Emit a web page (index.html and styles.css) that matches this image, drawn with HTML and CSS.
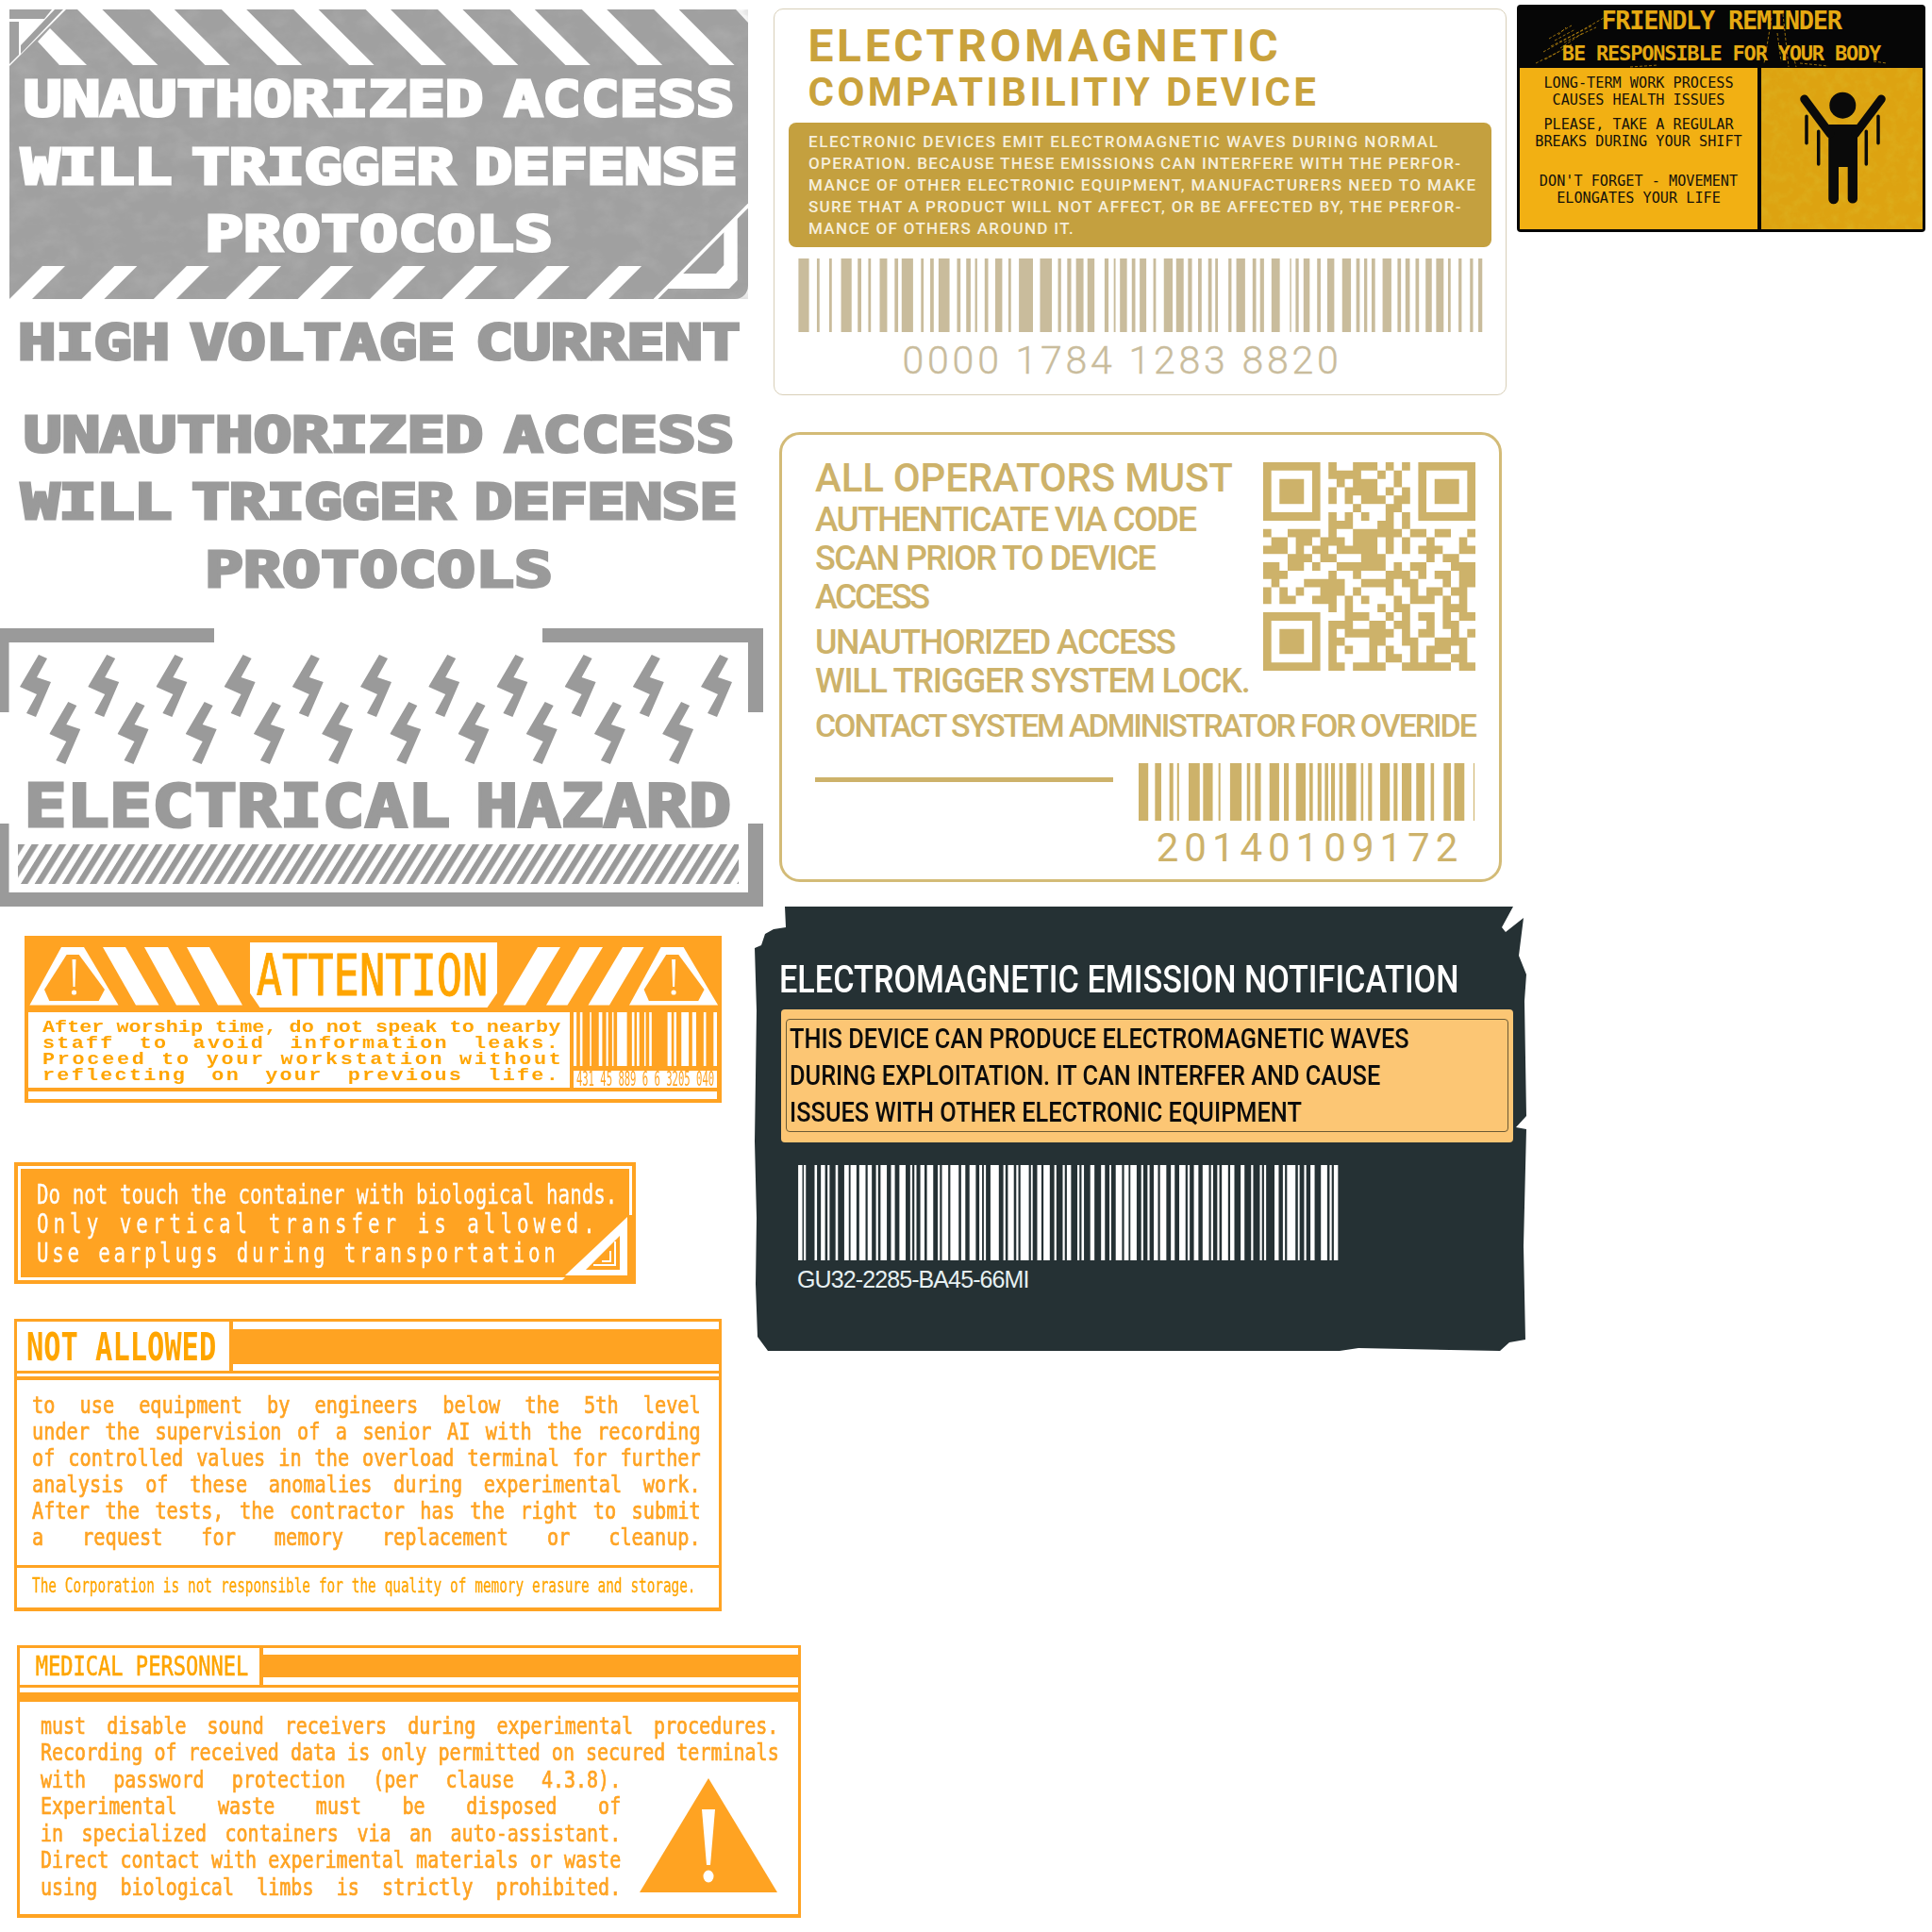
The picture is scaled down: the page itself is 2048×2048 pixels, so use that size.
FILE: index.html
```html
<!DOCTYPE html>
<html lang="en">
<head>
    <meta charset="UTF-8">
    <title>Warning decals</title>
    <link rel="stylesheet" href="styles.css">
</head>
<body>
    <!-- shared svg bits -->
    <svg class="defs" width="0" height="0">
        <defs>
            <filter id="grain" x="0" y="0" width="100%" height="100%">
                <feTurbulence type="fractalNoise" baseFrequency=".035 .05" numOctaves="5" seed="7"/>
                <feColorMatrix values="0 0 0 0 .45  0 0 0 0 .45  0 0 0 0 .45  0 0 0 1 -.42"/>
            </filter>
            <filter id="grit" x="0" y="0" width="100%" height="100%">
                <feTurbulence type="fractalNoise" baseFrequency=".09" numOctaves="4" seed="3"/>
                <feColorMatrix values="0 0 0 0 .72  0 0 0 0 .48  0 0 0 0 .02  0 0 0 2.2 -.95"/>
            </filter>
            <symbol id="bolt" width="34" height="67">
                <polygon points="20,0 29,4 18,24 33,29 17,66 7,62 18,42 0,34"/>
            </symbol>
            <symbol id="alert" width="100" height="76">
                <polygon class="white" points="39,12 63,12 99.5,73.5 5.4,73.5"/>
                <polygon class="orange" points="44.6,20 57.7,20 85,57 78.6,69 26.3,69 21,57"/>
                <polygon class="white" points="50.5,25 54.5,25 53.5,54 51.5,54"/>
                <circle class="white" cx="52.5" cy="60" r="2.6"/>
            </symbol>
        </defs>
    </svg>

    <!-- grey unauthorized panel -->
    <div class="decal access-panel">
        <svg class="panel-art" width="783" height="307">
            <path class="panel-fill" d="M0 0H770L783 14V293a14 14 0 0 1-14 14H0Z"/>
            <path class="panel-grain" filter="url(#grain)" d="M0 0H770L783 14V293a14 14 0 0 1-14 14H0Z"/>
            <g class="white">
                <polygon points="0,0 60,0 0,60"/>
                <polygon points="30,34 53,59 82,59 43,20"/>
                <polygon points="72,0 98.4,0 157.4,59 131,59"/>
                <polygon points="148.4,0 174.8,0 233.8,59 207.4,59"/>
                <polygon points="224.8,0 251.2,0 310.2,59 283.8,59"/>
                <polygon points="301.2,0 327.6,0 386.6,59 360.2,59"/>
                <polygon points="377.6,0 404,0 463,59 436.6,59"/>
                <polygon points="454,0 480.4,0 539.4,59 513,59"/>
                <polygon points="530.4,0 556.8,0 615.8,59 589.4,59"/>
                <polygon points="606.8,0 633.2,0 692.2,59 665.8,59"/>
                <polygon points="683.2,0 709.6,0 768.6,59 742.2,59"/>
                <polygon points="35,272 59,272 24,307 0,307"/>
                <polygon points="111.4,272 135.4,272 100.4,307 76.4,307"/>
                <polygon points="187.8,272 211.8,272 176.8,307 152.8,307"/>
                <polygon points="264.2,272 288.2,272 253.2,307 229.2,307"/>
                <polygon points="340.6,272 364.6,272 329.6,307 305.6,307"/>
                <polygon points="417,272 441,272 406,307 382,307"/>
                <polygon points="493.4,272 517.4,272 482.4,307 458.4,307"/>
                <polygon points="569.8,272 593.8,272 558.8,307 534.8,307"/>
                <polygon points="646.2,272 670.2,272 635.2,307 611.2,307"/>
                <polygon points="771.7,220 771.7,287 763,296 695,296"/>
            </g>
            <g class="panel-fill">
                <polygon points="0,0 45,0 37,10 0,10"/>
                <polygon points="0,13 10,13 10,48 0,58"/>
                <polygon points="48,0 57,0 12,47 12,38"/>
                <polygon points="757.3,236 757.3,271 749,280 711.7,280"/>
            </g>
            <line class="white-line" x1="784" y1="207" x2="684" y2="308"/>
        </svg>
        <div class="stencil on-panel">
            <div class="ls-a">UNAUTHORIZED ACCESS</div>
            <div class="ls-b">WILL TRIGGER DEFENSE</div>
            <div class="ls-c">PROTOCOLS</div>
        </div>
    </div>

    <!-- grey text only -->
    <div class="decal grey-copy">
        <div class="stencil ls-d">HIGH VOLTAGE CURRENT</div>
        <div class="stencil grey-lines">
            <div class="ls-a">UNAUTHORIZED ACCESS</div>
            <div class="ls-b">WILL TRIGGER DEFENSE</div>
            <div class="ls-c">PROTOCOLS</div>
        </div>
    </div>

    <!-- electrical hazard -->
    <div class="decal hazard">
        <svg class="hazard-art" width="809" height="295">
            <defs>
                <pattern id="hatch" width="14.6" height="42" patternUnits="userSpaceOnUse" patternTransform="translate(19 229) skewX(-32)">
                    <rect class="grey-fill" width="7.4" height="42"/>
                </pattern>
            </defs>
            <g class="grey-fill">
                <polygon points="0,0 227,0 227,15 9.5,15 9.5,89 0,89"/>
                <polygon points="575,0 809,0 809,89 793,89 793,15 575,15"/>
                <polygon points="0,207 9.5,207 9.5,280 793,280 793,207 809,207 809,295 0,295"/>
                <rect x="19" y="229" width="764" height="42" fill="url(#hatch)"/>
                <use href="#bolt" x="21" y="28"/><use href="#bolt" x="93.2" y="28"/><use href="#bolt" x="165.4" y="28"/>
                <use href="#bolt" x="237.6" y="28"/><use href="#bolt" x="309.8" y="28"/><use href="#bolt" x="382" y="28"/>
                <use href="#bolt" x="454.2" y="28"/><use href="#bolt" x="526.4" y="28"/><use href="#bolt" x="598.6" y="28"/>
                <use href="#bolt" x="670.8" y="28"/><use href="#bolt" x="743" y="28"/>
                <use href="#bolt" x="52.3" y="78"/><use href="#bolt" x="124.5" y="78"/><use href="#bolt" x="196.7" y="78"/>
                <use href="#bolt" x="268.9" y="78"/><use href="#bolt" x="341.1" y="78"/><use href="#bolt" x="413.3" y="78"/>
                <use href="#bolt" x="485.5" y="78"/><use href="#bolt" x="557.7" y="78"/><use href="#bolt" x="629.9" y="78"/>
                <use href="#bolt" x="702.1" y="78"/>
            </g>
        </svg>
        <div class="hazard-title">ELECTRICAL HAZARD</div>
    </div>

    <!-- attention -->
    <div class="decal attention">
        <div class="att-head">
            <svg width="239" height="78">
                <use href="#alert"/>
                <g class="white">
                    <polygon points="83,12 107,12 142.5,73.5 118,73.5"/>
                    <polygon points="127,12 152,12 186,73.5 161,73.5"/>
                    <polygon points="172,12 196,12 231,73.5 205,73.5"/>
                </g>
            </svg>
            <div class="att-tab"><span class="att-word">ATTENTION</span></div>
            <svg width="238" height="78">
                <g class="white">
                    <polygon points="43,12 67,12 30,73.5 6.5,73.5"/>
                    <polygon points="87.5,12 112,12 74.5,73.5 52,73.5"/>
                    <polygon points="133,12 155.5,12 119,73.5 96.5,73.5"/>
                </g>
                <use href="#alert" x="134.6"/>
            </svg>
        </div>
        <div class="att-body">
            <div class="att-copy">
                <div class="att-lines">
                    <div>After worship time, do not speak to nearby</div>
                    <div class="ls-wide">staff to avoid information leaks.</div>
                    <div class="ls-wider">Proceed to your workstation without</div>
                    <div class="ls-wide">reflecting on your previous life.</div>
                </div>
            </div>
            <div class="att-code">
                <svg class="att-bars" viewBox="0 0 290 100" preserveAspectRatio="none">
                    <line x1="0" y1="50" x2="290" y2="50" stroke-dasharray="6 7 5 15 3 15 7 8 4 8 3 7 20 10 5 5 5 10 3 7 5 32 8 5 5 10 15 7 8 15 5 15 7"/>
                </svg>
                <div class="att-num"><span>431 45 889 6 6 3205 040</span></div>
            </div>
        </div>
        <div class="att-strip"></div>
    </div>

    <!-- orange notice -->
    <div class="decal notice">
        <div class="notice-inner">
            <div class="notice-lines">
                <div>Do not touch the container with biological hands.</div>
                <div class="ls-n2">Only vertical transfer is allowed.</div>
                <div class="ls-n3">Use earplugs during transportation</div>
            </div>
        </div>
        <svg class="notice-fold" width="80" height="70">
            <polygon class="orange" points="74,0 80,0 80,70 4,70"/>
            <polygon class="white" points="74,2 74,64 8,64"/>
            <polygon class="orange" points="66,22 66,58 30,58"/>
            <polyline class="fold-line" points="38,53 61,53 61,28"/>
            <polyline class="fold-line" points="47,49 56,49 56,38"/>
        </svg>
    </div>

    <!-- not allowed -->
    <div class="decal plate not-allowed">
        <div class="plate-head">
            <div class="plate-tab"><span class="plate-name">NOT ALLOWED</span></div>
            <div class="plate-bars"><i></i><b></b><i></i></div>
        </div>
        <div class="plate-rule"></div>
        <div class="plate-body">
            <div class="copy">
                <div>to use equipment by engineers below the 5th level</div>
                <div>under the supervision of a senior AI with the recording</div>
                <div>of controlled values in the overload terminal for further</div>
                <div>analysis of these anomalies during experimental work.</div>
                <div>After the tests, the contractor has the right to submit</div>
                <div>a request for memory replacement or cleanup.</div>
            </div>
        </div>
        <div class="plate-foot">
            <div class="foot-copy">The Corporation is not responsible for the quality of memory erasure and storage.</div>
        </div>
    </div>

    <!-- medical personnel -->
    <div class="decal plate medical">
        <div class="plate-head">
            <div class="plate-tab"><span class="plate-name">MEDICAL PERSONNEL</span></div>
            <div class="plate-bars"><i></i><b></b><i></i></div>
        </div>
        <div class="plate-rule"></div>
        <div class="plate-body">
            <div class="copy full">
                <div>must disable sound receivers during experimental procedures.</div>
                <div>Recording of received data is only permitted on secured terminals</div>
            </div>
            <div class="med-row">
                <div class="med-text">
                    <div class="copy short">
                        <div>with password protection (per clause 4.3.8).</div>
                        <div>Experimental waste must be disposed of</div>
                        <div>in specialized containers via an auto-assistant.</div>
                        <div>Direct contact with experimental materials or waste</div>
                        <div>using biological limbs is strictly prohibited.</div>
                    </div>
                </div>
                <svg class="med-sign" width="146" height="122">
                    <polygon class="orange" points="73,0 146,121 0,121"/>
                    <polygon class="white" points="66,33 80,33 75,92 71,92"/>
                    <ellipse class="white" cx="73" cy="104" rx="5.5" ry="6.5"/>
                </svg>
            </div>
        </div>
    </div>

    <!-- emc label -->
    <div class="decal emc">
        <div class="emc-title">ELECTROMAGNETIC</div>
        <div class="emc-sub">COMPATIBILITIY DEVICE</div>
        <div class="emc-band">
            <div class="e1">ELECTRONIC DEVICES EMIT ELECTROMAGNETIC WAVES DURING NORMAL</div>
            <div class="e2">OPERATION. BECAUSE THESE EMISSIONS CAN INTERFERE WITH THE PERFOR-</div>
            <div class="e3">MANCE OF OTHER ELECTRONIC EQUIPMENT, MANUFACTURERS NEED TO MAKE</div>
            <div class="e4">SURE THAT A PRODUCT WILL NOT AFFECT, OR BE AFFECTED BY, THE PERFOR-</div>
            <div class="e5">MANCE OF OTHERS AROUND IT.</div>
        </div>
        <svg class="emc-bars" viewBox="0 0 1568 100" preserveAspectRatio="none">
            <line x1="3" y1="50" x2="1560" y2="50" stroke-dasharray="24 18 6 22 6 21 24 14 8 16 6 20 17 17 8 8 26 18 6 15 8 11 25 17 8 13 10 10 5 17 8 16 16 14 6 18 32 16 27 14 7 14 9 11 17 9 16 23 9 12 4 10 16 11 8 10 15 16 6 18 20 8 17 10 9 14 8 15 8 8 6 24 7 11 20 17 8 9 9 17 19 23 3 10 7 11 14 17 8 15 16 18 20 12 8 10 7 10 8 17 20 14 8 10 10 13 8 15 14 10 17 10 6 18 7 19 7 12 14"/>
        </svg>
        <div class="emc-num">0000 1784 1283 8820</div>
    </div>

    <!-- operators label -->
    <div class="decal operators">
        <div class="op-top">
            <div class="op-lines">
                <div class="op-1">ALL OPERATORS MUST</div>
                <div class="op-2">AUTHENTICATE VIA CODE</div>
                <div class="op-3">SCAN PRIOR TO DEVICE</div>
                <div class="op-3 op-access">ACCESS</div>
                <div class="op-3 op-gap">UNAUTHORIZED ACCESS</div>
                <div class="op-3 op-will">WILL TRIGGER SYSTEM LOCK.</div>
            </div>
            <svg class="op-qr" viewBox="0 0 26 25" preserveAspectRatio="none">
                <path class="qr-eye" d="M.5 .5h6v6h-6zM19.5 .5h6v6h-6zM.5 18.5h6v6h-6z"/>
                <path class="qr-pupil" d="M2 2h3v3h-3zM21 2h3v3h-3zM2 20h3v3h-3z"/>
                <path class="qr-bits" d="M8 .5h1M11 .5h3M15 .5h1M17 .5h1
                    M8 1.5h4M14 1.5h1M16 1.5h1
                    M9 2.5h1M11 2.5h3M16 2.5h1
                    M8 3.5h1M10 3.5h4M15 3.5h1M17 3.5h1
                    M8 4.5h1M10 4.5h1M12 4.5h3M16 4.5h2
                    M11 5.5h1M15 5.5h2
                    M8 6.5h1M10 6.5h1M12 6.5h1M15 6.5h1M17 6.5h1
                    M8 7.5h3M14 7.5h2M17 7.5h1
                    M0 8.5h1M3 8.5h4M8 8.5h1M11 8.5h6M18 8.5h2M21 8.5h2M25 8.5h1
                    M1 9.5h2M4 9.5h2M7 9.5h3M11 9.5h3M15 9.5h1M17 9.5h1M20 9.5h1M24 9.5h1
                    M0 10.5h3M4 10.5h1M6 10.5h2M9 10.5h3M12 10.5h2M15 10.5h1M17 10.5h1M19 10.5h3M24 10.5h2
                    M3 11.5h3M7 11.5h2M12 11.5h3M20 11.5h1M22 11.5h2
                    M0 12.5h2M3 12.5h2M6 12.5h1M9 12.5h6M16 12.5h1M18 12.5h2M23 12.5h3
                    M0 13.5h3M8 13.5h1M11 13.5h1M15 13.5h3M19 13.5h1M21 13.5h2M24 13.5h2
                    M1 14.5h1M5 14.5h5M12 14.5h4M17 14.5h2M22 14.5h1M24 14.5h2
                    M0 15.5h1M2 15.5h1M4 15.5h1M7 15.5h3M11 15.5h1M15 15.5h1M18 15.5h1M20 15.5h2M23 15.5h2
                    M0 16.5h1M2 16.5h2M6 16.5h3M10 16.5h1M12 16.5h1M16 16.5h1M18 16.5h3M22 16.5h1M24 16.5h1
                    M8 17.5h1M10 17.5h1M14 17.5h1M16 17.5h2M22 17.5h3
                    M10 18.5h3M15 18.5h1M17 18.5h1M19 18.5h2M22 18.5h1M24 18.5h2
                    M8 19.5h3M13 19.5h2M16 19.5h2M20 19.5h1M22 19.5h2
                    M8 20.5h1M10 20.5h6M17 20.5h1M19 20.5h2M23 20.5h1M25 20.5h1
                    M8 21.5h2M13 21.5h2M17 21.5h2M21 21.5h4
                    M8 22.5h1M10 22.5h1M13 22.5h1M15 22.5h1M18 22.5h1M20 22.5h3M24 22.5h1
                    M8 23.5h1M13 23.5h1M15 23.5h2M18 23.5h1M20 23.5h1M23 23.5h2
                    M8 24.5h2M11 24.5h4M17 24.5h6M24 24.5h2"/>
            </svg>
        </div>
        <div class="op-contact">CONTACT SYSTEM ADMINISTRATOR FOR OVERIDE</div>
        <div class="op-bottom">
            <div class="op-rule"></div>
            <div class="op-code">
                <svg class="op-bars" viewBox="0 0 698 100" preserveAspectRatio="none">
                    <line x1="0" y1="50" x2="698" y2="50" stroke-dasharray="20 14 13 17 8 8 4 20 23 7 20 12 4 20 24 11 7 10 12 18 20 10 10 15 20 8 7 10 8 7 7 6 8 9 7 8 20 10 5 10 8 17 20 8 8 9 20 10 17 13 7 20 15 7 21 19 9"/>
                </svg>
                <div class="op-num">20140109172</div>
            </div>
        </div>
    </div>

    <!-- dark emission label -->
    <div class="decal emission">
        <div class="em-title">ELECTROMAGNETIC EMISSION NOTIFICATION</div>
        <div class="em-box">
            <div class="em-inner">
                <div class="em-lines">
                    <div>THIS DEVICE CAN PRODUCE ELECTROMAGNETIC WAVES</div>
                    <div>DURING EXPLOITATION. IT CAN INTERFER AND CAUSE</div>
                    <div>ISSUES WITH OTHER ELECTRONIC EQUIPMENT</div>
                </div>
            </div>
        </div>
        <svg class="em-bars" viewBox="0 0 1568 100" preserveAspectRatio="none">
            <line x1="3" y1="50" x2="1550" y2="50" stroke-dasharray="12 4 6 25 7 11 12 7 6 17 7 18 13 5 17 8 18 6 12 12 6 7 18 12 11 13 18 13 6 6 6 11 12 7 18 13 6 6 18 6 24 7 12 12 18 10 8 5 6 13 24 13 6 7 17 7 6 6 24 6 5 13 12 6 18 13 6 18 6 6 12 18 6 6 7 18 12 19 11 13 5 13 18 6 13 5 18 13 6 12 6 12 12 6 18 13 11 13 18 6 6 12 13 12 18 6 6 12 6 7 18 6 12 18 11 19 6 19 6 6 6 24 12 12 6 6 24 7 5 13 6 12 12 18 18 7 6 6 12"/>
        </svg>
        <div class="em-code">GU32-2285-BA45-66MI</div>
    </div>

    <!-- friendly reminder -->
    <div class="decal reminder">
        <svg class="rem-scratch" width="433" height="67">
            <path d="M28 50L92 14M36 44L80 22M40 38L62 26M44 32L52 24M30 58L58 42M50 40L84 24M20 62L44 50M34 36L58 22M46 46L70 30"/>
            <path d="M270 14L262 62M282 10L288 66M276 30L280 60M292 50L296 66M378 60L392 62M300 62L330 65M120 66L150 64"/>
        </svg>
        <div class="rem-title">FRIENDLY REMINDER</div>
        <div class="rem-sub">BE RESPONSIBLE FOR YOUR BODY</div>
        <div class="rem-panels">
            <div class="rem-copy">
                <p>LONG-TERM WORK PROCESS<br>CAUSES HEALTH ISSUES</p>
                <p>PLEASE, TAKE A REGULAR<br>BREAKS DURING YOUR SHIFT</p>
                <p class="rem-last">DON'T FORGET - MOVEMENT<br>ELONGATES YOUR LIFE</p>
            </div>
            <div class="rem-figure">
                <svg width="171" height="171">
                    <rect class="rem-grit" width="171" height="171" filter="url(#grit)"/>
                    <circle cx="86.3" cy="39.7" r="14"/>
                    <path d="M66 60H106L102 72V139a5.2 5.2 0 0 1-10.3 0V105H82V139a5.3 5.3 0 0 1-10.7 0V72Z"/>
                    <path class="rem-limb" d="M45.7 33L73 69.7M127.3 33L99.7 69.7"/>
                    <path class="rem-move" d="M48 51.3V79.7M60.7 67.3V102M111.3 67.3V102M124 51.3V79.7"/>
                </svg>
            </div>
        </div>
    </div>
</body>
</html>
```

FILE: styles.css
```css
body {
    margin: 0;
    background-color: #fff;
    width: 2048px;
    height: 2048px;
    position: relative;
    overflow: hidden;
    font-family: "DejaVu Sans Mono", monospace;
}
.defs {
    position: absolute;
}
/* decals sit on a free sheet, so each one gets its own spot */
.decal {
    position: absolute;
    box-sizing: border-box;
}
.white {
    fill: #fff;
}
.orange {
    fill: #ffa322;
}
.grey-fill {
    fill: #9a9a9a;
}

/* heavy block lettering */
.stencil {
    width: 597.7px;
    font-size: 52px;
    font-weight: bold;
    line-height: 71.5px;
    word-spacing: -14px;
    text-align: center;
    white-space: nowrap;
    color: #9a9a9a;
    -webkit-text-stroke: 3px currentColor;
    transform: scaleX(1.31);
    transform-origin: 0 0;
}
.ls-a {
    letter-spacing: -.3px;
}
.ls-b {
    letter-spacing: -.95px;
}
.ls-c {
    letter-spacing: 0;
}
.ls-d {
    letter-spacing: -.7px;
}

/* grey panel */
.access-panel {
    left: 10px;
    top: 10px;
    width: 783px;
    height: 307px;
}
.panel-art {
    position: absolute;
    left: 0;
    top: 0;
}
.panel-fill {
    fill: #a0a0a0;
}
.panel-grain {
    fill: #000;
}
.white-line {
    stroke: #fff;
    stroke-width: 3.5;
}
.on-panel {
    position: relative;
    padding-top: 60px;
    color: #fff;
}

.grey-copy {
    left: 10px;
    top: 328px;
    width: 783px;
}
.grey-lines {
    margin-top: 26px;
}

/* electrical hazard */
.hazard {
    left: 0;
    top: 666px;
    width: 809px;
    height: 295px;
}
.hazard-art {
    position: absolute;
    left: 0;
    top: 0;
}
.hazard-title {
    position: relative;
    width: 660px;
    padding: 154px 0 0 21px;
    font-size: 62px;
    font-weight: bold;
    line-height: 70px;
    word-spacing: -15px;
    white-space: nowrap;
    color: #9a9a9a;
    -webkit-text-stroke: 3px currentColor;
    transform: scaleX(1.21);
    transform-origin: 0 0;
}

/* attention */
.attention {
    left: 26px;
    top: 992px;
    width: 739px;
    height: 177px;
    background-color: #ffa322;
    padding: 0 5px 0 4px;
    display: flex;
    flex-direction: column;
}
.att-head {
    display: flex;
    height: 81px;
    margin-left: -4px;
    margin-right: -5px;
}
.att-head svg {
    flex: none;
}
.att-tab {
    width: 262px;
    height: 69px;
    margin-top: 7px;
    background-color: #fff;
    clip-path: polygon(0 0, 100% 0, 100% 78%, 96% 100%, 4% 100%, 0 78%);
}
.att-word {
    display: block;
    width: 340px;
    padding: 2px 0 0 9px;
    font-size: 60px;
    line-height: 66px;
    color: #ffa500;
    white-space: nowrap;
    -webkit-text-stroke: 1px currentColor;
    transform: scaleX(.755);
    transform-origin: 0 0;
}
.att-body {
    display: flex;
    gap: 4px;
    height: 80px;
}
.att-copy {
    width: 574px;
    background-color: #fff;
    box-sizing: border-box;
    padding: 7.5px 0 0 14.5px;
}
.att-lines {
    width: 466px;
    font-family: "Liberation Mono", monospace;
    font-size: 18.5px;
    font-weight: bold;
    line-height: 17.2px;
    color: #ffa500;
    white-space: nowrap;
    transform: scaleX(1.178);
    transform-origin: 0 0;
}
.att-lines div {
    text-align-last: justify;
}
.ls-wide {
    letter-spacing: 1.9px;
}
.ls-wider {
    letter-spacing: 2.3px;
}
.att-code {
    width: 152px;
}
.att-bars {
    display: block;
    width: 152px;
    height: 57px;
}
.att-bars line {
    stroke: #fff;
    stroke-width: 100;
}
.att-num {
    height: 18px;
    margin-top: 5px;
    background-color: #fff;
}
.att-num span {
    display: block;
    width: 304px;
    padding-left: 6px;
    font-size: 22px;
    line-height: 18px;
    color: #ffa322;
    white-space: nowrap;
    transform: scaleX(.48);
    transform-origin: 0 0;
}
.att-strip {
    height: 8.5px;
    margin-top: 3.5px;
    background-color: #fff;
}

/* orange notice */
.notice {
    left: 14.6px;
    top: 1232px;
    width: 659px;
    height: 129px;
    background-color: #ffa322;
    padding: 4px;
}
.notice-inner {
    height: 100%;
    box-sizing: border-box;
    border: 3px solid #fff;
    padding: 12px 0 0 17.5px;
}
.notice-lines {
    width: 830px;
    font-size: 28px;
    line-height: 31px;
    color: #fff;
    white-space: nowrap;
    -webkit-text-stroke: .3px currentColor;
    transform: scaleX(.745);
    transform-origin: 0 0;
}
.ls-n2 {
    letter-spacing: 6.7px;
}
.ls-n3 {
    letter-spacing: 5px;
}
.notice-fold {
    position: absolute;
    right: 3px;
    bottom: 3px;
}
.fold-line {
    fill: none;
    stroke: #fff;
    stroke-width: 2;
}

/* the two bordered plates */
.plate {
    background-color: #ffa322;
    padding: 3px;
    display: flex;
    flex-direction: column;
}
.plate-head {
    display: flex;
    gap: 3.5px;
}
.plate-tab {
    background-color: #fff;
}
.plate-name {
    display: block;
    white-space: nowrap;
    color: #ffa500;
    transform-origin: 0 0;
}
.plate-bars {
    flex: 1;
    display: flex;
    flex-direction: column;
}
.plate-bars i {
    height: 7.5px;
    background-color: #fff;
}
.plate-bars b {
    flex: 1;
}
.plate-body {
    background-color: #fff;
    box-sizing: border-box;
}
.plate-rule {
    box-sizing: border-box;
    background-color: #fff;
    background-clip: content-box;
}
.copy {
    color: #ffa322;
    white-space: nowrap;
    transform-origin: 0 0;
    font-size: 25px;
    -webkit-text-stroke: .7px currentColor;
}
.copy div {
    text-align-last: justify;
}

.not-allowed {
    left: 15px;
    top: 1398px;
    width: 750px;
    height: 310px;
}
.not-allowed .plate-head {
    height: 52px;
}
.not-allowed .plate-tab {
    width: 225px;
}
.not-allowed .plate-name {
    padding: 3px 0 0 13px;
    font-size: 40px;
    font-weight: bold;
    line-height: 49px;
    transform: scaleX(.76);
}
.not-allowed .plate-rule {
    height: 10px;
    padding: 2.5px 0 4px;
}
.not-allowed .plate-body {
    height: 196px;
    padding: 13px 0 0 16px;
}
.not-allowed .copy {
    width: 875px;
    line-height: 28px;
    transform: scaleX(.81);
}
.plate-foot {
    height: 42px;
    margin-top: 3px;
    background-color: #fff;
    padding-left: 16px;
}
.foot-copy {
    width: 1005px;
    font-size: 20.5px;
    line-height: 38px;
    color: #ffa500;
    white-space: nowrap;
    text-align-last: justify;
    -webkit-text-stroke: .3px currentColor;
    transform: scaleX(.7);
    transform-origin: 0 0;
}

.medical {
    left: 18px;
    top: 1743.5px;
    width: 831px;
    height: 289px;
}
.medical .plate-head {
    height: 39px;
}
.medical .plate-tab {
    width: 254px;
}
.medical .plate-name {
    padding-left: 22px;
    font-size: 29px;
    line-height: 38px;
    -webkit-text-stroke: .6px currentColor;
    transform: scaleX(.76);
}
.medical .plate-rule {
    height: 18px;
    padding: 3px 0 10px;
}
.medical .plate-body {
    height: 225px;
    padding: 12px 0 0 21.5px;
}
.medical .copy {
    line-height: 28.6px;
    transform: scaleX(.8);
}
.medical .full {
    width: 978px;
    height: 57px;
}
.med-row {
    display: flex;
}
.med-text {
    flex: none;
    width: 615px;
}
.medical .short {
    width: 769px;
}
.med-sign {
    flex: none;
    margin: 12px 0 0 20px;
}

/* emc label */
.emc {
    left: 820px;
    top: 9px;
    width: 777px;
    height: 410px;
    border: 1.5px solid #d8cfb8;
    border-radius: 10px;
    padding: 15px;
    font-family: Roboto, sans-serif;
}
.emc-title {
    margin-left: 20.5px;
    font-size: 48px;
    font-weight: 700;
    line-height: 48px;
    letter-spacing: 3.6px;
    color: #c9a23c;
}
.emc-sub {
    margin: 2px 0 9px 20.5px;
    font-size: 42px;
    font-weight: 700;
    line-height: 46px;
    letter-spacing: 3.4px;
    color: #c9a23c;
}
.emc-band {
    height: 132px;
    box-sizing: border-box;
    padding: 8.5px 0 0 21px;
    background-color: #c4a03f;
    border-radius: 8px;
    font-size: 17px;
    font-weight: 500;
    line-height: 23px;
    color: #f6efdc;
    white-space: nowrap;
}
.e1 {
    letter-spacing: 1.55px;
}
.e2 {
    letter-spacing: 1.3px;
}
.e3 {
    letter-spacing: 1.45px;
}
.e4 {
    letter-spacing: 1.33px;
}
.e5 {
    letter-spacing: 1.35px;
}
.emc-bars {
    display: block;
    width: 730px;
    height: 78px;
    margin: 12px 0 0 8.5px;
}
.emc-bars line {
    stroke: #c9bc9c;
    stroke-width: 100;
}
.emc-num {
    margin: 8px 0 0 120.5px;
    font-size: 41px;
    font-weight: 300;
    line-height: 44px;
    letter-spacing: 3.8px;
    color: #c9bc9c;
    -webkit-text-stroke: .4px currentColor;
}

/* operators label */
.operators {
    left: 826px;
    top: 458px;
    width: 766px;
    height: 477px;
    border: 3px solid #d3bb77;
    border-radius: 22px;
    padding: 24px 0 0 35px;
    font-family: Roboto, sans-serif;
    font-weight: 500;
    color: #cdb26a;
}
.op-top {
    display: flex;
}
.op-lines {
    width: 475px;
    flex: none;
    white-space: nowrap;
}
.op-1 {
    font-size: 42px;
    line-height: 44.5px;
    letter-spacing: -.2px;
}
.op-2 {
    font-size: 37px;
    line-height: 42.5px;
    letter-spacing: -1.7px;
}
.op-3 {
    font-size: 36px;
    line-height: 41px;
    letter-spacing: -1.55px;
}
.op-access {
    letter-spacing: -2.5px;
}
.op-gap {
    margin-top: 7px;
}
.op-will {
    letter-spacing: -1.26px;
}
.op-qr {
    flex: none;
    width: 225px;
    height: 221px;
    margin-top: 5px;
}
.qr-eye {
    fill: none;
    stroke: #cdb26a;
    stroke-width: 1;
}
.qr-pupil {
    fill: #cdb26a;
}
.qr-bits {
    fill: none;
    stroke: #cdb26a;
    stroke-width: 1;
}
.op-contact {
    margin-top: 8px;
    font-size: 34px;
    line-height: 36px;
    letter-spacing: -2.1px;
    white-space: nowrap;
}
.op-bottom {
    display: flex;
    gap: 27px;
    margin-top: 21.5px;
}
.op-rule {
    width: 316px;
    height: 5px;
    margin-top: 15px;
    background-color: #cdb26a;
}
.op-code {
    width: 356px;
}
.op-bars {
    display: block;
    width: 356px;
    height: 61px;
}
.op-bars line {
    stroke: #cdb26a;
    stroke-width: 100;
}
.op-num {
    margin-top: 7px;
    padding-left: 7px;
    font-size: 42px;
    font-weight: 400;
    line-height: 44px;
    letter-spacing: 6px;
    text-align: center;
}

/* dark label */
.emission {
    left: 800px;
    top: 961px;
    width: 818px;
    height: 471px;
    background-color: #253134;
    padding: 55px 0 0 26px;
    font-family: Roboto, sans-serif;
    clip-path: polygon(32px 0, 33px 22px, 20px 24px, 11px 29px, 7px 41px, 0 44px, 2px 110px, 0 249px, 2px 330px, 1px 400px, 3px 456px, 14px 471px, 620px 471px, 640px 468px, 790px 471px, 800px 462px, 817px 459px, 815px 360px, 818px 236px, 807px 234px, 818px 222px, 816px 100px, 818px 72px, 810px 52px, 815px 12px, 796px 27px, 792px 22px, 804px 0);
}
.em-title {
    width: 900px;
    font-size: 41px;
    font-weight: 500;
    line-height: 44px;
    color: #fff;
    white-space: nowrap;
    transform: scaleX(.835);
    transform-origin: 0 0;
}
.em-box {
    width: 776.5px;
    height: 141px;
    margin: 10px 0 0 1.5px;
    box-sizing: border-box;
    padding: 10px 5px 11px;
    background-color: #fcc674;
    border-radius: 4px;
}
.em-inner {
    height: 100%;
    box-sizing: border-box;
    border: 1px solid #6b5a35;
    border-radius: 4px;
    padding: 0 0 0 3px;
}
.em-lines {
    width: 900px;
    font-size: 30px;
    font-weight: 500;
    line-height: 39px;
    color: #0b0b0b;
    white-space: nowrap;
    transform: scaleX(.845);
    transform-origin: 0 0;
}
.em-bars {
    display: block;
    width: 580px;
    height: 101px;
    margin: 24px 0 0 19px;
}
.em-bars line {
    stroke: #fff;
    stroke-width: 100;
}
.em-code {
    margin: 6px 0 0 19px;
    font-family: "Liberation Sans", sans-serif;
    font-size: 25px;
    line-height: 28px;
    letter-spacing: -.9px;
    color: #e6f0f2;
}

/* friendly reminder */
.reminder {
    left: 1608px;
    top: 5px;
    width: 433px;
    height: 241px;
    background-color: #060606;
    border-radius: 4px;
    padding: 1px 3px 0;
    text-align: center;
    font-weight: bold;
    color: #e5a912;
}
.rem-scratch {
    position: absolute;
    left: 0;
    top: 0;
}
.rem-scratch path {
    fill: none;
    stroke: #c8920f;
    stroke-width: 1;
    stroke-dasharray: 3 2;
    opacity: .75;
}
.rem-title {
    position: relative;
    font-size: 27px;
    line-height: 32px;
    letter-spacing: -1.3px;
}
.rem-sub {
    position: relative;
    margin-top: 4px;
    font-size: 22px;
    line-height: 30px;
    letter-spacing: -1.2px;
    white-space: nowrap;
}
.rem-panels {
    display: flex;
    gap: 4px;
    height: 171px;
}
.rem-copy {
    width: 252px;
    box-sizing: border-box;
    padding-top: 8px;
    background-color: #f2b013;
    font-size: 15.2px;
    font-weight: normal;
    line-height: 17.5px;
    color: #15120a;
}
.rem-copy p {
    margin: 0 0 9px;
}
.rem-copy .rem-last {
    margin-top: 25px;
}
.rem-figure {
    width: 171px;
    background-color: #dda311;
}
.rem-figure svg {
    display: block;
}
.rem-grit {
    opacity: .5;
}
.rem-figure circle,
.rem-figure path {
    fill: #0a0a0a;
}
.rem-figure .rem-limb {
    fill: none;
    stroke: #0a0a0a;
    stroke-width: 9;
    stroke-linecap: round;
}
.rem-figure .rem-move {
    fill: none;
    stroke: #0a0a0a;
    stroke-width: 3.5;
    stroke-linecap: round;
}
```
